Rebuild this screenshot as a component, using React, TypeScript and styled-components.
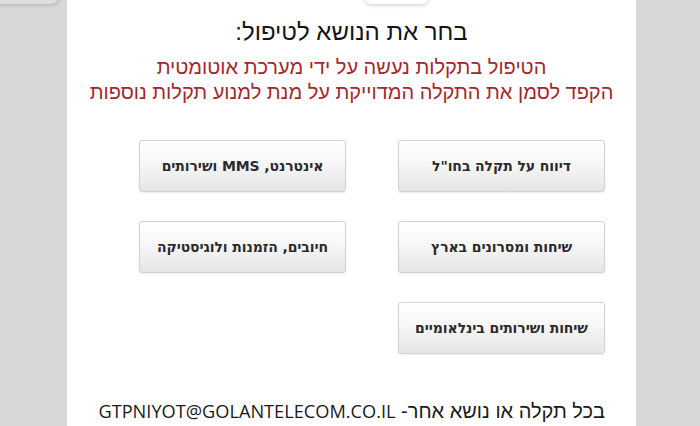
import styled, { createGlobalStyle } from "styled-components";

const GlobalStyle = createGlobalStyle`
  html, body {
    margin: 0;
    padding: 0;
    height: 426px;
    overflow: hidden;
    background: #d8d8d8;
  }
`;

const Page = styled.div`
  position: relative;
  height: 426px;
  padding-left: 67px;
  overflow: hidden;
`;

const TopLeftTab = styled.div`
  position: absolute;
  top: -30px;
  left: -12px;
  width: 72px;
  height: 34px;
  border-radius: 10px;
  background: #dedede;
  box-shadow: 1px 1px 4px rgba(0, 0, 0, 0.18);
`;

const Panel = styled.main`
  position: relative;
  width: 569px;
  height: 426px;
  background: #fff;
  direction: rtl;
  padding: 16px 31px 0 0;
  box-sizing: border-box;
`;

const TopNotch = styled.div`
  position: absolute;
  top: -30px;
  left: 298px;
  width: 63px;
  height: 34px;
  border-radius: 6px;
  background: #fff;
  box-shadow: 0 1px 4px rgba(0, 0, 0, 0.22);
`;

const Title = styled.h1`
  margin: 0 -31px 0 0;
  font-family: "Liberation Sans", "DejaVu Sans", sans-serif;
  font-weight: normal;
  font-size: 24px;
  line-height: 32px;
  color: #151515;
  text-align: center;
`;

const Notice = styled.p`
  margin: 7px -31px 0 0;
  font-family: "Liberation Sans", "DejaVu Sans", sans-serif;
  font-size: 20px;
  line-height: 25px;
  color: #a3282c;
  text-align: center;
`;

const TopicGrid = styled.div`
  display: grid;
  grid-template-columns: repeat(2, 207px);
  grid-auto-rows: 52px;
  column-gap: 52px;
  row-gap: 29px;
  margin-top: 35px;
`;

const TopicButton = styled.button`
  font-family: "DejaVu Sans", Tahoma, sans-serif;
  font-weight: bold;
  font-size: 14px;
  letter-spacing: -0.1px;
  color: #2b2b2b;
  direction: rtl;
  background: linear-gradient(to bottom, #ffffff 0%, #f7f7f7 45%, #e4e4e4 100%);
  border: 1px solid #d2d2d2;
  border-radius: 3px;
  box-shadow: 0 1px 2px rgba(0, 0, 0, 0.08);
  cursor: pointer;
  padding: 0 4px;
`;

const Contact = styled.p`
  margin: 45px 0 0;
  font-family: "Liberation Sans", "DejaVu Sans", sans-serif;
  font-size: 20px;
  line-height: 24px;
  color: #1a1a1a;
  text-align: right;
`;

const Email = styled.span`
  font-family: "Open Sans", "Liberation Sans", sans-serif;
  font-size: 18.2px;
`;

const topics = [
  'דיווח על תקלה בחו"ל',
  "אינטרנט, MMS ושירותים",
  "שיחות ומסרונים בארץ",
  "חיובים, הזמנות ולוגיסטיקה",
  "שיחות ושירותים בינלאומיים",
];

export default function App() {
  return (
    <>
      <GlobalStyle />
      <Page>
        <TopLeftTab />
        <Panel>
          <TopNotch />
          <Title>בחר את הנושא לטיפול:</Title>
          <Notice>
            הטיפול בתקלות נעשה על ידי מערכת אוטומטית
            <br />
            הקפד לסמן את התקלה המדוייקת על מנת למנוע תקלות נוספות
          </Notice>
          <TopicGrid>
            {topics.map((t) => (
              <TopicButton key={t}>{t}</TopicButton>
            ))}
          </TopicGrid>
          <Contact>
            בכל תקלה או נושא אחר- <Email>GTPNIYOT@GOLANTELECOM.CO.IL</Email>
          </Contact>
        </Panel>
      </Page>
    </>
  );
}
